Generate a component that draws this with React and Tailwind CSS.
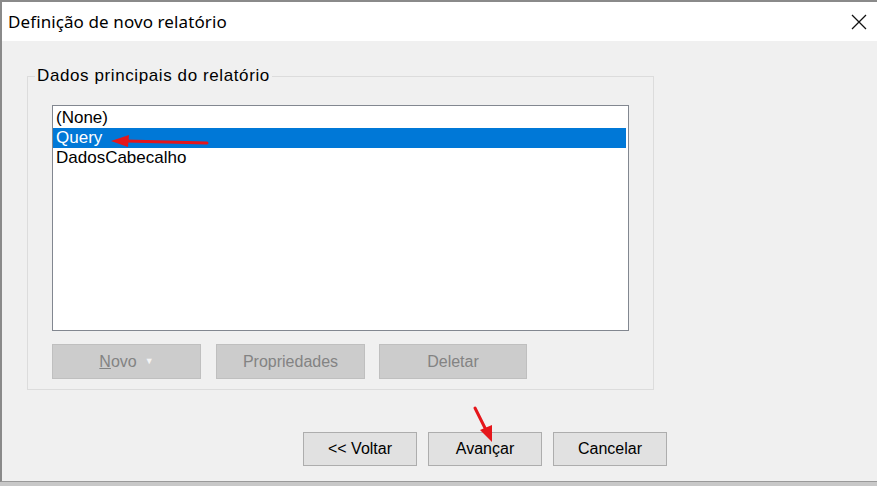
import React from 'react';

const items = ['(None)', 'Query', 'DadosCabecalho'];

function DisabledButton({ className = '', children }) {
  return (
    <div className={`h-[35px] flex items-center justify-center bg-[#cccccc] border border-[#bfbfbf] text-[#838383] ${className}`}>
      {children}
    </div>
  );
}

function Button({ children }) {
  return (
    <div className="w-[114px] h-[34px] flex items-center justify-center bg-[#e1e1e1] border border-[#adadad] text-[#000]">
      {children}
    </div>
  );
}

export default function App() {
  return (
    <div
      className="relative w-[877px] h-[486px] overflow-hidden flex flex-col bg-[#c8c8c8]"
      style={{ fontFamily: '"Liberation Sans", Arial, sans-serif' }}
    >
      <div className="flex-1 flex flex-col border-l-2 border-t-2 border-[#8a8a8a] border-b border-b-[#9a9a9a] mb-[4px]">
        {/* title bar */}
        <div className="h-[39px] bg-white flex items-center justify-between pl-[6px] pr-[8px]">
          <span className="text-[17px] text-[#000] tracking-[0.1px]" style={{ fontFamily: '"Noto Sans", sans-serif' }}>
            Definição de novo relatório
          </span>
          <svg width="18" height="18" viewBox="0 0 18 18" className="mr-[1px]">
            <path d="M2 2 L16 16 M16 2 L2 16" stroke="#111" strokeWidth="1.3" />
          </svg>
        </div>

        {/* body */}
        <div className="flex-1 bg-[#f0f0f0] pt-[35px] pl-[25px]">
          <div className="relative w-[627px] h-[314px] border border-[#dcdcdc] pt-[28px] pl-[24px]">
            <span className="absolute -top-[11px] left-[7px] px-[2px] bg-[#f0f0f0] text-[17px] tracking-[0.6px] text-black leading-[20px]">
              Dados principais do relatório
            </span>
            <div className="w-[577px] h-[226px] bg-white border border-[#828790] pt-[2px] pr-[2px] text-[17px] text-black">
              {items.map((it) => (
                <div
                  key={it}
                  className={`h-[20px] leading-[20px] pl-[3px] ${it === 'Query' ? 'bg-[#0078d7] text-white' : ''}`}
                >
                  {it}
                </div>
              ))}
            </div>
            <div className="flex mt-[13px] text-[16px]">
              <DisabledButton className="w-[149px]">
                <span><span className="underline">N</span>ovo</span>
                <span className="ml-[8px] text-[9px] text-[#f4f4f4]">▼</span>
              </DisabledButton>
              <DisabledButton className="w-[149px] ml-[15px]">Propriedades</DisabledButton>
              <DisabledButton className="w-[148px] ml-[14px]">Deletar</DisabledButton>
            </div>
          </div>

          <div className="flex gap-[11px] mt-[42px] ml-[276px] text-[16px]">
            <Button>&lt;&lt; Voltar</Button>
            <Button>Avançar</Button>
            <Button>Cancelar</Button>
          </div>
        </div>
      </div>

      {/* annotation arrows */}
      <svg className="absolute left-0 top-0 pointer-events-none" width="877" height="486">
        <path d="M207 143 L126 141" stroke="#e5161b" strokeWidth="3" strokeLinecap="round" />
        <polygon points="111,141 129,135 128,147" fill="#e5161b" />
        <path d="M475 408 L486 430" stroke="#e5161b" strokeWidth="3" strokeLinecap="round" />
        <polygon points="492,442 480,430 492,425" fill="#e5161b" />
      </svg>
    </div>
  );
}
